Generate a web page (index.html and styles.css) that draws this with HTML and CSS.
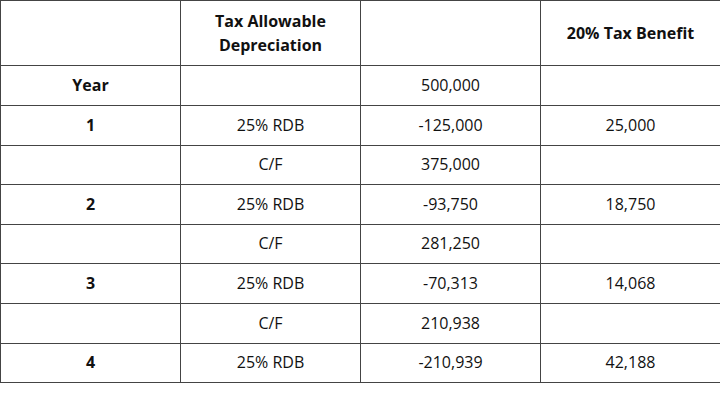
FILE: index.html
```html
<!DOCTYPE html>
<html>
<head>
<meta charset="utf-8">
<link rel="stylesheet" href="styles.css">
</head>
<body>
<table class="tbl">
  <colgroup><col class="c"><col class="c"><col class="c"><col class="c"></colgroup>
  <tr class="head"><th></th><th>Tax Allowable<br>Depreciation</th><th></th><th>20% Tax Benefit</th></tr>
  <tr class="r40"><th>Year</th><td></td><td>500,000</td><td></td></tr>
  <tr class="r40"><th>1</th><td>25% RDB</td><td>-125,000</td><td>25,000</td></tr>
  <tr class="r39"><th></th><td>C/F</td><td>375,000</td><td></td></tr>
  <tr class="r40"><th>2</th><td>25% RDB</td><td>-93,750</td><td>18,750</td></tr>
  <tr class="r39"><th></th><td>C/F</td><td>281,250</td><td></td></tr>
  <tr class="r40"><th>3</th><td>25% RDB</td><td>-70,313</td><td>14,068</td></tr>
  <tr class="r40"><th></th><td>C/F</td><td>210,938</td><td></td></tr>
  <tr class="r39"><th>4</th><td>25% RDB</td><td>-210,939</td><td>42,188</td></tr>
</table>
</body>
</html>
```
FILE: styles.css
```css
html, body {
  margin: 0;
  padding: 0;
  background: #fff;
}
.tbl {
  border-collapse: collapse;
  table-layout: fixed;
  width: 720px;
  font-family: "Open Sans", "Liberation Sans", sans-serif;
  font-size: 16px;
  color: #111;
}
.c { width: 180px; }
.tbl th, .tbl td {
  border: 1px solid #444;
  padding: 0 4px 2px;
  text-align: center;
  vertical-align: middle;
  line-height: 24px;
}
.head th { padding-bottom: 0; }
.tbl th { font-weight: 700; }
.tbl td { font-weight: 400; }
.head { height: 65px; }
.r40 { height: 40px; }
.r39 { height: 39px; }
```
